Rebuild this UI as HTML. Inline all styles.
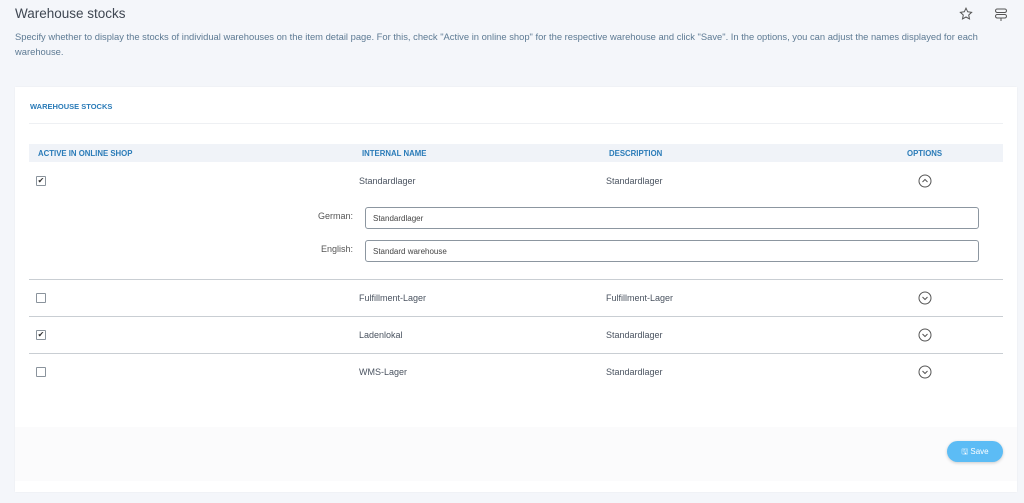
<!DOCTYPE html>
<html><head><style>
*{margin:0;padding:0;box-sizing:border-box}
body{width:1024px;height:503px;background:#f4f6fa;font-family:"Liberation Sans",sans-serif;color:#4a5360;position:relative;overflow:hidden}
.abs{position:absolute}
h1{position:absolute;left:15px;top:6px;font-size:13.5px;font-weight:normal;color:#3f4752}
.desc{left:15px;top:29px;width:1000px;font-size:9.4px;line-height:15px;color:#5d7a93;white-space:nowrap}
.card{left:15px;top:87px;width:1002px;height:405px;background:#fff;box-shadow:0 0 2px rgba(0,0,0,.05)}
.sec{left:15px;top:15px;font-size:7.5px;font-weight:bold;color:#2a7bb8}
.hr{height:1px;background:#dfe2e6}
.th{top:57px;left:14px;width:974px;height:18px;background:#f0f3f8}
.th span{position:absolute;top:5px;font-size:7.8px;font-weight:bold;color:#2a7bb8}
.t{font-size:9px;color:#4a5360}
.cb{width:10px;height:10px;border:1px solid #8a939c;border-radius:1px;font-size:8px;line-height:8px;text-align:center;color:#333}
.inp{left:350px;width:614px;height:22px;border:1px solid #8c96a0;border-radius:3px;font-size:8px;padding:6px 7px;color:#444}
.lbl{font-size:9px;color:#555;text-align:right;width:60px}
.foot{left:0;top:340px;width:1002px;height:54px;background:#fbfbfc}
.save{left:932px;top:354px;width:56px;height:21px;border-radius:11px;background:#5cbcf5;color:#fff;font-size:8px;text-align:center;line-height:21px;box-shadow:0 1px 3px rgba(0,0,0,.2)}
</style></head><body>
<h1>Warehouse stocks</h1>
<div class="abs desc">Specify whether to display the stocks of individual warehouses on the item detail page. For this, check "Active in online shop" for the respective warehouse and click "Save". In the options, you can adjust the names displayed for each<br>warehouse.</div>
<svg class="abs" style="left:959px;top:7px" width="14" height="14" viewBox="0 0 14 14"><path d="M7 1.2l1.7 3.6 3.9.5-2.9 2.7.8 3.9L7 10 3.5 11.9l.8-3.9L1.4 5.3l3.9-.5z" fill="none" stroke="#555" stroke-width="1"/></svg>
<svg class="abs" style="left:994px;top:8px" width="14" height="14" viewBox="0 0 14 14"><rect x="1.5" y="1" width="11" height="3.5" rx="1.7" fill="none" stroke="#555"/><rect x="1.5" y="6.5" width="11" height="3.5" rx="1.7" fill="none" stroke="#555"/><path d="M7 10v3" stroke="#555"/></svg>
<div class="abs card">
<div class="abs sec">WAREHOUSE STOCKS</div>
<div class="abs hr" style="left:14px;top:36px;width:974px;background:#eef0f3"></div>
<div class="abs th"><span style="left:9px">ACTIVE IN ONLINE SHOP</span><span style="left:333px">INTERNAL NAME</span><span style="left:580px">DESCRIPTION</span><span style="left:878px">OPTIONS</span></div>
<div class="abs cb" style="left:21px;top:89px">✔</div>
<div class="abs t" style="left:344px;top:89px">Standardlager</div>
<div class="abs t" style="left:591px;top:89px">Standardlager</div>
<svg class="abs" style="left:903px;top:87px" width="14" height="14" viewBox="0 0 14 14"><circle cx="7" cy="7" r="6" fill="none" stroke="#555"/><path d="M4.5 8l2.5-2.5 2.5 2.5" fill="none" stroke="#555"/></svg>
<div class="abs lbl" style="left:278px;top:124px">German:</div>
<div class="abs inp" style="top:120px">Standardlager</div>
<div class="abs lbl" style="left:278px;top:157px">English:</div>
<div class="abs inp" style="top:153px">Standard warehouse</div>
<div class="abs hr" style="left:14px;top:192px;width:974px;background:#c9ced3"></div>
<div class="abs cb" style="left:21px;top:206px"></div>
<div class="abs t" style="left:344px;top:206px">Fulfillment-Lager</div>
<div class="abs t" style="left:591px;top:206px">Fulfillment-Lager</div>
<svg class="abs" style="left:903px;top:204px" width="14" height="14" viewBox="0 0 14 14"><circle cx="7" cy="7" r="6" fill="none" stroke="#555"/><path d="M4.5 6l2.5 2.5 2.5-2.5" fill="none" stroke="#555"/></svg>
<div class="abs hr" style="left:14px;top:229px;width:974px;background:#c9ced3"></div>
<div class="abs cb" style="left:21px;top:243px">✔</div>
<div class="abs t" style="left:344px;top:243px">Ladenlokal</div>
<div class="abs t" style="left:591px;top:243px">Standardlager</div>
<svg class="abs" style="left:903px;top:241px" width="14" height="14" viewBox="0 0 14 14"><circle cx="7" cy="7" r="6" fill="none" stroke="#555"/><path d="M4.5 6l2.5 2.5 2.5-2.5" fill="none" stroke="#555"/></svg>
<div class="abs hr" style="left:14px;top:266px;width:974px;background:#c9ced3"></div>
<div class="abs cb" style="left:21px;top:280px"></div>
<div class="abs t" style="left:344px;top:280px">WMS-Lager</div>
<div class="abs t" style="left:591px;top:280px">Standardlager</div>
<svg class="abs" style="left:903px;top:278px" width="14" height="14" viewBox="0 0 14 14"><circle cx="7" cy="7" r="6" fill="none" stroke="#555"/><path d="M4.5 6l2.5 2.5 2.5-2.5" fill="none" stroke="#555"/></svg>
<div class="abs foot"></div>
<div class="abs save">🖫 Save</div>
</div>
</body></html>
